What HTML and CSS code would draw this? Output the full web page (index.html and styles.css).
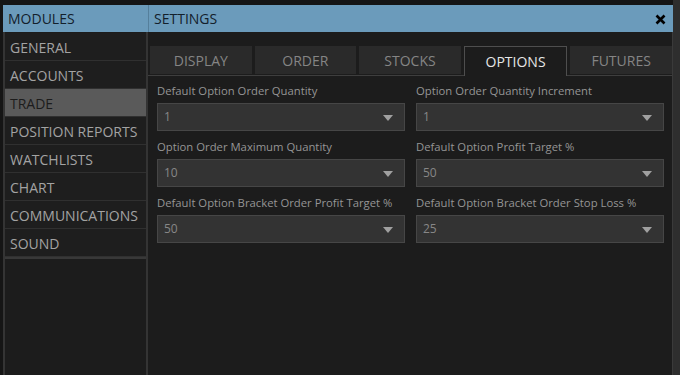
FILE: index.html
```html
<!DOCTYPE html>
<html lang="en">
    <head>
        <meta charset="UTF-8" />
        <title>Settings</title>
        <link rel="stylesheet" href="styles.css">
    </head>
    <body>
        <div class="window">
            <div class="titlebar">
                <div class="title title-modules">MODULES</div>
                <div class="title title-settings">
                    <span>SETTINGS</span>
                    <svg class="close" width="11" height="11" viewBox="0 0 11 11">
                        <path d="M1.5 1.5 L9.5 9.5 M9.5 1.5 L1.5 9.5" stroke="#000" stroke-width="2.6" />
                    </svg>
                </div>
            </div>

            <div class="main">
                <div class="modules">
                    <ul class="module-list">
                        <li>GENERAL</li>
                        <li>ACCOUNTS</li>
                        <li class="selected">TRADE</li>
                        <li>POSITION REPORTS</li>
                        <li>WATCHLISTS</li>
                        <li>CHART</li>
                        <li>COMMUNICATIONS</li>
                        <li>SOUND</li>
                    </ul>
                </div>

                <div class="settings">
                    <div class="tabs">
                        <div class="tab">DISPLAY</div>
                        <div class="tab">ORDER</div>
                        <div class="tab">STOCKS</div>
                        <div class="tab active">OPTIONS</div>
                        <div class="tab">FUTURES</div>
                    </div>

                    <div class="tab-body">
                        <div class="field">
                            <label>Default Option Order Quantity</label>
                            <div class="select">1</div>
                        </div>
                        <div class="field">
                            <label>Option Order Quantity Increment</label>
                            <div class="select">1</div>
                        </div>
                        <div class="field">
                            <label>Option Order Maximum Quantity</label>
                            <div class="select">10</div>
                        </div>
                        <div class="field">
                            <label>Default Option Profit Target %</label>
                            <div class="select">50</div>
                        </div>
                        <div class="field">
                            <label>Default Option Bracket Order Profit Target %</label>
                            <div class="select">50</div>
                        </div>
                        <div class="field">
                            <label>Default Option Bracket Order Stop Loss %</label>
                            <div class="select">25</div>
                        </div>
                    </div>
                </div>
            </div>
        </div>
    </body>
</html>
```

FILE: styles.css
```css
body {
  margin: 0;
  background: linear-gradient(to right, #151515 0, #151515 673px, #2e2e2e 673px);
  font-family: "Open Sans", sans-serif;
  height: 375px;
  overflow: hidden;
}

.window {
  margin: 5px 0 0 3px;
  width: 670px;
  height: 370px;
  display: flex;
  flex-direction: column;
  background-color: #1c1c1c;
}

.titlebar {
  display: grid;
  grid-template-columns: 145px 1fr;
  height: 27px;
  background-color: #6b9bbb;
  color: #13202b;
  font-size: 14px;
}

.title {
  display: flex;
  align-items: center;
  padding-left: 5px;
}

.title-settings {
  justify-content: space-between;
  border-left: 1px solid #557f9b;
  padding-right: 7px;
}

.close {
  margin-top: 2px;
}

.main {
  flex: 1;
  display: grid;
  grid-template-columns: 145px 1fr;
}

.modules {
  border-left: 2px solid #343434;
  border-right: 2px solid #343434;
  background-color: #1c1c1c;
}

.module-list {
  list-style: none;
  margin: 1px 0 0;
  padding: 0;
  border-bottom: 2px solid #383838;
}

.module-list li {
  height: 27px;
  line-height: 29px;
  padding-left: 5px;
  font-size: 14px;
  color: #a3a3a3;
  background-color: #1e1e1e;
  border-bottom: 1px solid #303030;
}

.module-list li.selected {
  background-color: #5a5a5a;
  color: #1c1c1c;
}

.settings {
  background-color: #1c1c1c;
  border-right: 1px solid #3a3a3a;
  padding-top: 14px;
}

.tabs {
  display: flex;
  gap: 3px;
  padding-left: 2px;
  border-bottom: 1px solid #3e3e3e;
}

.tab {
  flex: 1;
  height: 28px;
  display: flex;
  align-items: center;
  justify-content: center;
  font-size: 14px;
  color: #858585;
  background-color: #2a2a2a;
}

.tab.active {
  background-color: #1c1c1c;
  color: #e6e6e6;
  border: 1px solid #4e4e4e;
  border-bottom: none;
  height: 29px;
  margin-bottom: -1px;
}

.tab-body {
  display: grid;
  grid-template-columns: 1fr 1fr;
  column-gap: 11px;
  row-gap: 6px;
  padding: 5px 8px 0 9px;
}

.field label {
  display: block;
  height: 22px;
  line-height: 19px;
  font-size: 11.3px;
  color: #959595;
}

.select {
  position: relative;
  height: 26px;
  line-height: 26px;
  padding-left: 6px;
  font-size: 12px;
  color: #878787;
  background-color: #333333;
  border: 1px solid #464646;
}

.select::after {
  content: "";
  position: absolute;
  right: 11px;
  top: 11px;
  border-left: 5px solid transparent;
  border-right: 5px solid transparent;
  border-top: 6px solid #a0a0a0;
}
```
